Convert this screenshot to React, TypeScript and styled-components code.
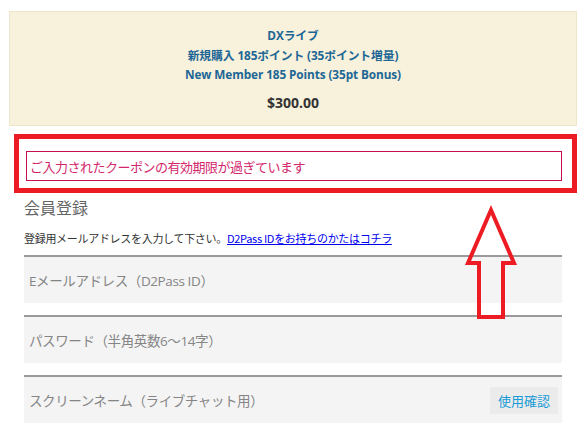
import React from "react";
import styled, { createGlobalStyle } from "styled-components";

const GlobalStyle = createGlobalStyle`
  body {
    margin: 0;
    background: #ffffff;
    font-family: "Noto Sans CJK JP", "Noto Sans", "DejaVu Sans", sans-serif;
  }
`;

const Page = styled.div`
  position: relative;
  width: 586px;
  height: 436px;
  overflow: hidden;
  padding: 11px 9px 0 9px;
  box-sizing: border-box;
`;

const Product = styled.div`
  background: #f8f1db;
  border: 1px solid #eee6cb;
  height: 115px;
  box-sizing: border-box;
  display: flex;
  flex-direction: column;
  align-items: center;
  padding-top: 14px;
`;

const ProductLine = styled.div`
  color: #1d6796;
  font-size: 11.8px;
  font-weight: 700;
  letter-spacing: -0.1px;
  line-height: 19.5px;
  font-family: "Open Sans", "Noto Sans CJK JP", sans-serif;
`;

const Price = styled.div`
  color: #333333;
  font-size: 14px;
  font-weight: 700;
  margin-top: 8px;
  font-family: "Open Sans", "Noto Sans CJK JP", sans-serif;
`;

const Highlight = styled.div`
  margin: 8px 0 0 5px;
  border: 5px solid #ed1c24;
  padding: 12px 10px 7px 7px;
`;

const ErrorBox = styled.div`
  border: 1px solid #c8104a;
  height: 30px;
  box-sizing: border-box;
  display: flex;
  align-items: center;
  padding-left: 3px;
  color: #d3266b;
  font-size: 13px;
  letter-spacing: -0.5px;
`;

const Form = styled.div`
  padding: 0 15px;
`;

const Heading = styled.div`
  color: #666666;
  font-size: 16px;
  margin-top: 3px;
  line-height: 22px;
`;

const Note = styled.div`
  color: #333333;
  font-size: 11px;
  letter-spacing: -0.3px;
  margin-top: 11px;
  line-height: 18px;
  a {
    color: #0000ee;
    text-decoration: underline;
  }
`;

const Fields = styled.div`
  display: flex;
  flex-direction: column;
  gap: 12px;
  margin-top: 8px;
`;

const Field = styled.div`
  height: 48px;
  box-sizing: border-box;
  background: #f4f4f4;
  border-top: 2px solid #9a9a9a;
  display: flex;
  align-items: center;
  justify-content: space-between;
  padding: 0 4px 0 5px;
`;

const Placeholder = styled.span`
  color: #858585;
  font-size: 13.5px;
  letter-spacing: -0.4px;
  font-family: "Open Sans", "Noto Sans CJK JP", sans-serif;
`;

const CheckButton = styled.span`
  background: #ebebeb;
  color: #1a9bd7;
  font-size: 13px;
  padding: 4px 8px;
`;

const Arrow = styled.svg`
  position: absolute;
  left: 464px;
  top: 205px;
`;

export default function App() {
  return (
    <>
      <GlobalStyle />
      <Page>
        <Product>
          <ProductLine>DXライブ</ProductLine>
          <ProductLine>新規購入 185ポイント (35ポイント増量)</ProductLine>
          <ProductLine>New Member 185 Points (35pt Bonus)</ProductLine>
          <Price>$300.00</Price>
        </Product>
        <Highlight>
          <ErrorBox>ご入力されたクーポンの有効期限が過ぎています</ErrorBox>
        </Highlight>
        <Form>
          <Heading>会員登録</Heading>
          <Note>
            登録用メールアドレスを入力して下さい。<a href="#">D2Pass IDをお持ちのかたはコチラ</a>
          </Note>
          <Fields>
            <Field>
              <Placeholder>Eメールアドレス（D2Pass ID）</Placeholder>
            </Field>
            <Field>
              <Placeholder>パスワード（半角英数6～14字）</Placeholder>
            </Field>
            <Field>
              <Placeholder>スクリーンネーム（ライブチャット用）</Placeholder>
              <CheckButton>使用確認</CheckButton>
            </Field>
          </Fields>
        </Form>
        <Arrow width="54" height="116" viewBox="0 0 54 116">
          <polygon
            points="27,5 50,58 39,58 39,112 15,112 15,58 4,58"
            fill="none"
            stroke="#ed1c24"
            strokeWidth="4"
            strokeLinejoin="miter"
          />
        </Arrow>
      </Page>
    </>
  );
}
